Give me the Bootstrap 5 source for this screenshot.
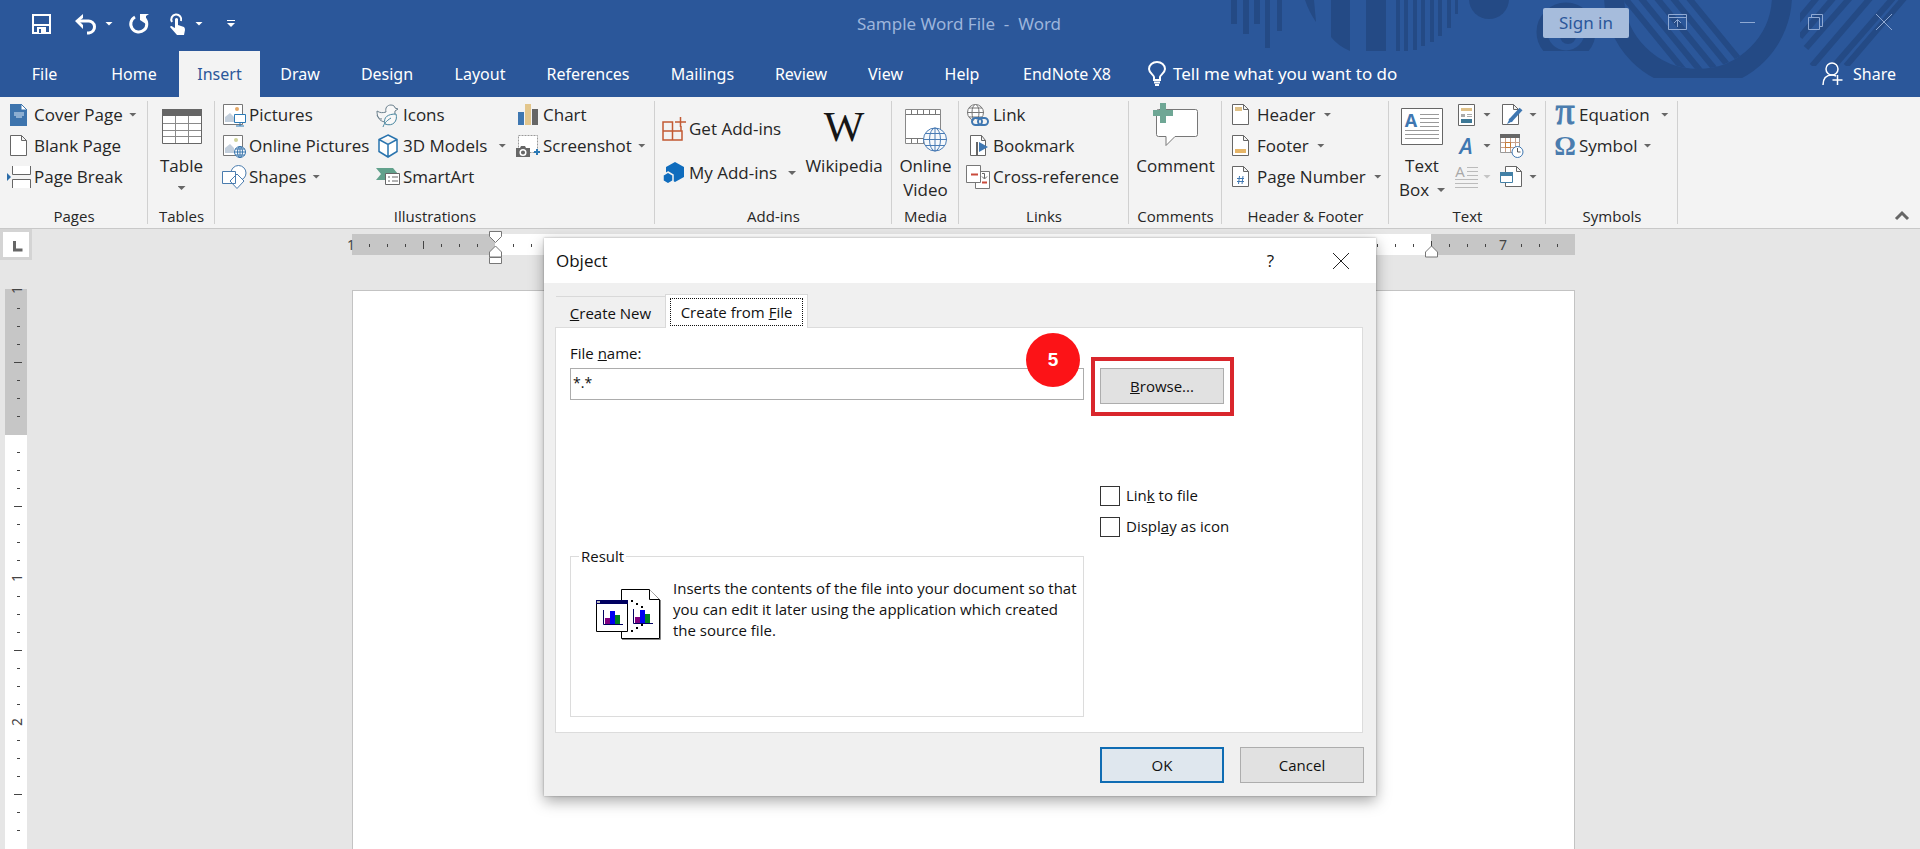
<!DOCTYPE html>
<html lang="en">
<head>
<meta charset="utf-8">
<meta name="viewport" content="width=device-width, initial-scale=1">
<title>Sample Word File - Word</title>
<link href="https://cdn.jsdelivr.net/npm/bootstrap@5.3.0/dist/css/bootstrap.min.css" rel="stylesheet">
<style>
  body { font-family: "Noto Sans", "Open Sans", sans-serif; font-size: 16px; line-height: 24px; color: #262626; background: #e6e6e6; }
  button { background: none; border: 0; padding: 0; color: inherit; font: inherit; text-align: left; white-space: nowrap; }
  svg { display: block; flex: none; overflow: visible; }
  .app { min-height: 100vh; overflow: hidden; }

  /* title bar and tabs */
  .masthead { background: #2b579a; color: #fff; }
  .masthead-art { position: absolute; top: 0; right: 0; }
  .title-row { height: 51px; padding-top: 4px; }
  .doc-title { color: #9db5dc; white-space: pre; font-size: 17px; padding-right: 34px; }
  .quick { padding-left: 32px; height: 39px; }
  .quick-gap { width: 16px; }
  .side { flex: 1 1 0; }
  .sign-in { width: 86px; height: 30px; border-radius: 2px; background: #a6bcdc; color: #2b579a; text-align: center; font-size: 17px; }
  .win-btns { gap: 53px; padding: 10px 28px 0 39px; }
  .tab-row { height: 46px; }
  .tabs { display: grid; grid-template-columns: 89px 90px 81px 80px 94px 92px 124px 105px 92px 77px 76px 134px; }
  .tabs a { color: #fff; text-decoration: none; text-align: center; line-height: 46px; white-space: nowrap; }
  .tabs a.active { background: #f3f3f3; color: #2b579a; }
  .tell { padding-left: 14px; gap: 7px; font-size: 17px; }
  .share { padding-right: 24px; gap: 10px; }

  /* ribbon */
  .ribbon { background: #f3f3f3; border-bottom: 1px solid #c8c8c8; font-family: "Open Sans", sans-serif; font-size: 17px; }
  .ribbon-groups { display: grid; grid-template-columns: 148px 67px 440px 237px 67px 170px 93px 167px 157px 132px 1fr; }
  .grp { position: relative; display: flex; flex-direction: column; }
  .grp::after { content: ""; position: absolute; right: 0; top: 4px; bottom: 4px; width: 1px; background: #d0d0d0; }
  .grp-body { height: 107px; padding-top: 2px; display: flex; }
  .grp-name { font-size: 15px; text-align: center; height: 24px; white-space: nowrap; }
  .item { display: flex; align-items: center; height: 31px; gap: 3px; }
  .tri { width: 8px; height: 4px; background: #666; clip-path: polygon(0 0, 100% 0, 50% 100%); display: block; flex: none; }
  .tri.white { background: #fff; }
  .tri.faint { background: #c4c4c4; }
  .tri.near { margin-left: 3px; }
  .tri.far { margin-left: 8px; }
  .pad { padding-left: 7px; }
  .ill { display: grid; grid-template-columns: 154px 140px auto; }
  .addins .item { height: 44px; }
  .addins { padding-top: 10px; }
  .addins .large { padding-top: 0; }
  .large { display: flex; flex-direction: column; align-items: center; text-align: center; padding-top: 4px; width: 100%; }
  .hf .item { gap: 8px; }
  .hf .tri.near { margin-left: 0; }
  .collapse-btn { align-self: end; justify-self: end; padding: 0 11px 8px 0; }
  .serif-sign { font-family: "Liberation Serif", serif; }

  /* workspace */
  .workspace { position: relative; flex: 1 1 auto; display: flex; padding-right: 27px; }
  .left-rail { width: 33px; flex: none; }
  .tab-kind { width: 32px; height: 31px; background: #fff; border: 3px solid #d4d4d4; margin-bottom: 29px; }
  .v-ruler { padding-left: 5px; }
  .doc { width: 1223px; margin: 0 auto; padding-top: 5px; flex: none; display: flex; flex-direction: column; }
  .h-ruler { margin-bottom: 35px; height: 21px; }
  .ruler-num { font-family: "Noto Sans", sans-serif; font-size: 14px; fill: #444; text-anchor: middle; }
  .paper { flex: 1 1 auto; background: #fff; border: 1px solid #c3c3c3; border-bottom: 0; }

  /* dialog */
  .dlg { position: absolute; top: 9px; left: 50%; width: 832px; margin-left: -416px; background: #f0f0f0; color: #111; font-family: "Open Sans", sans-serif; font-size: 15px; line-height: 21px; box-shadow: 0 5px 14px rgba(0,0,0,.35), 0 0 2px rgba(0,0,0,.3); padding-bottom: 13px; }
  .dlg-title { background: #fff; height: 45px; padding: 0 27px 0 12px; font-size: 17px; }
  .dlg-title .glyphs { gap: 59px; }
  .dlg-tabs { padding: 11px 0 0 12px; }
  .dlg-tab { height: 31px; width: 109px; text-align: center; border-top: 1px solid #d9d9d9; padding-top: 2px; }
  .dlg-tab.on { position: relative; z-index: 1; height: 34px; width: 143px; background: #fff; border: 1px solid #d9d9d9; border-bottom: 0; margin-bottom: -1px; padding: 2px 4px; }
  .dlg-tab.on span { display: block; border: 1px dotted #111; height: 28px; line-height: 26px; }
  .dlg-panel { margin: 0 13px 0 11px; border: 1px solid #dcdcdc; background: #fff; padding: 15px 13px 15px 14px; }
  .dlg-grid { display: grid; grid-template-columns: 514px 1fr; column-gap: 16px; }
  .file-box { width: 100%; height: 32px; border: 1px solid #acacac; padding: 0 2px 4px; margin-top: 4px; color: #111; display: block; font-size: 14px; }
  .grey-btn { width: 124px; height: 36px; background: #e1e1e1; border: 1px solid #adadad; text-align: center; }
  .grey-btn.primary { border: 2px solid #0f6cb3; background: #dfe7ee; }
  .mark-frame { position: absolute; left: -9px; top: -11px; bottom: -12px; border: 4px solid #d9262c; pointer-events: none; width: 143px; }
  .browse-cell { margin-top: 25px; }
  .step { position: absolute; right: 4px; top: -35px; width: 54px; height: 54px; border-radius: 50%; background: #fc1317; color: #fff; font: 700 19px/54px "Liberation Sans", sans-serif; text-align: center; }
  .checks { padding-top: 76px; }
  .checks label { display: flex; align-items: center; gap: 6px; height: 31px; }
  .checks input { appearance: none; width: 20px; height: 20px; border: 1px solid #333; background: #fff; margin: 0; }
  .result { border: 1px solid #dcdcdc; height: 171px; margin-top: 146px; padding: 0 10px 0 25px; min-width: 0; }
  .result legend { float: none; width: auto; font-size: 15px; line-height: 21px; margin: 0 0 0 -17px; padding: 0 2px; }
  .result-body { gap: 13px; padding-top: 11px; white-space: nowrap; }
  .result-body svg { margin-top: 11px; }
  .dlg-foot { gap: 16px; padding: 14px 12px 0 0; }
</style>
</head>
<body>
<div class="app d-flex flex-column">

<header class="masthead position-relative">
  <svg class="masthead-art" width="700" height="97" viewBox="1220 0 700 97" fill="#244a85" stroke="none">
    <defs>
      <clipPath id="ringIn"><circle cx="1698" cy="-5" r="74"/></clipPath>
      <clipPath id="ringCut"><rect x="1590" y="0" width="220" height="78"/></clipPath>
      <clipPath id="upper"><rect x="1220" y="0" width="700" height="51"/></clipPath>
      <clipPath id="upper2"><rect x="1800" y="0" width="120" height="66"/></clipPath>
    </defs>
    <path d="M1231 0h6v24h-6zM1243 0h6v34h-6zM1254 0h6v24h-6zM1265 0h5v48h-5zM1277 0h5v31h-5z"/>
    <path d="M1305 0h9l2 22q-7-10-11-22zM1331 0h19v51q-12-5-19-14zM1366 0h20v51h-20zM1396 0h4v51h-4zM1404 0h4v51h-4zM1413 0h4v50h-4zM1421 0h4v46h-4zM1430 0h4v42h-4zM1438 0h4v36h-4zM1447 0h4v28h-4zM1455 0h3v14h-3z"/>
    <circle cx="1489" cy="-1" r="20"/>
    <g clip-path="url(#upper)"><circle cx="1566" cy="32" r="24" fill="none" stroke="#244a85" stroke-width="11"/><circle cx="1568" cy="36" r="8"/></g>
    <g clip-path="url(#ringCut)"><circle cx="1698" cy="-5" r="84" fill="none" stroke="#244a85" stroke-width="20"/></g>
    <g clip-path="url(#ringIn)" stroke="#244a85" stroke-width="6"><path d="M1610-20l90 110M1626-20l90 110M1642-20l90 110M1658-20l90 110M1674-20l90 110"/></g>
    <g clip-path="url(#upper2)" stroke="#244a85" stroke-width="6"><path d="M1790 30l50-60M1800 37l60-70M1806 48l70-80M1812 66l90-105M1834 66l80-92M1846 66l90-105"/></g>
  </svg>

  <div class="title-row d-flex position-relative">
    <div class="side quick d-flex align-items-center">
      <button aria-label="Save"><svg width="19" height="20" viewBox="0 0 19 20"><path d="M1 1h17v18H1z" fill="none" stroke="#fff" stroke-width="2"/><path d="M1 10h17v2H1zM5 13h9v6H5z" fill="#fff"/><path d="M7 15h2v4H7z" fill="#2b579a"/></svg></button>
      <button class="ms-4 d-flex align-items-center gap-2" aria-label="Undo"><svg width="22" height="20" viewBox="0 0 22 20"><path d="M4 7h9a6 6 0 0 1 1 12h-2" fill="none" stroke="#fff" stroke-width="3"/><path d="M0 7l8-7v4l-4 3 4 4v4z" fill="#fff"/></svg><i class="tri white"></i></button>
      <span class="quick-gap"></span>
      <button aria-label="Repeat"><svg width="20" height="20" viewBox="0 0 20 20"><path d="M6 3a8 8 0 1 0 9 1" fill="none" stroke="#fff" stroke-width="3"/><path d="M11 0h9l-3 2v8l-6-4z" fill="#fff"/></svg></button>
      <button class="d-flex align-items-center ms-3" aria-label="Touch mode"><svg class="ms-1" width="18" height="22" viewBox="0 0 18 22"><path d="M3 9a5 5 0 1 1 9-1" fill="none" stroke="#fff" stroke-width="2"/><path d="M6 6q1.500-2 3 0v6l6 2q1 1 1 3l-1 5H8l-7-8q1-2 3 0l2 1z" fill="#fff"/></svg><i class="tri white ms-2"></i></button>
      <button class="ms-4" aria-label="Customize"><svg width="8" height="8" viewBox="0 0 8 8" fill="#fff"><path d="M0 0h8v1H0zM0 3h8l-4 4z"/></svg></button>
    </div>
    <div class="doc-title pt-2">Sample Word File  -  Word</div>
    <div class="side d-flex justify-content-end align-items-start">
      <button class="sign-in mt-1">Sign in</button>
      <div class="win-btns d-flex align-items-center">
        <button aria-label="Ribbon display"><svg width="19" height="16" viewBox="0 0 19 16" fill="none" stroke="#8fa9d3"><path d="M.5.5h18v15H.5zM.5 3.500h18M9.500 13V6M6 9l3.500-3.500L13 9"/></svg></button>
        <button aria-label="Minimize"><svg width="15" height="16" viewBox="0 0 15 16" stroke="#8fa9d3"><path d="M0 8.500h15"/></svg></button>
        <button aria-label="Restore"><svg width="15" height="16" viewBox="0 0 15 16" fill="none" stroke="#8fa9d3"><path d="M.5 3.500h11v12H.5zM3.500 3V.5h11v12H12"/></svg></button>
        <button aria-label="Close"><svg width="16" height="16" viewBox="0 0 16 16" stroke="#8fa9d3"><path d="M0 0l16 16M16 0L0 16"/></svg></button>
      </div>
    </div>
  </div>

  <div class="tab-row d-flex position-relative align-items-center">
    <nav class="tabs" aria-label="Ribbon tabs">
      <a href="#">File</a><a href="#">Home</a><a href="#" class="active">Insert</a><a href="#">Draw</a><a href="#">Design</a><a href="#">Layout</a><a href="#">References</a><a href="#">Mailings</a><a href="#">Review</a><a href="#">View</a><a href="#">Help</a><a href="#">EndNote X8</a>
    </nav>
    <button class="tell d-flex align-items-center"><svg width="18" height="24" viewBox="0 0 18 24" fill="none" stroke="#fff" stroke-width="2"><path d="M6 18v-3c0-2-5-4-5-8a8 7 0 0 1 16 0c0 4-5 6-5 8v3zM6 20.500h6M7 23h4"/></svg>Tell me what you want to do</button>
    <button class="share d-flex align-items-center ms-auto"><svg width="21" height="24" viewBox="0 0 21 24" fill="none" stroke="#fff" stroke-width="1.500"><circle cx="10" cy="7" r="6"/><path d="M1 23c0-6 3-10 9-10 2 0 3 .500 4 1M15.500 13v10M10.500 18h10"/></svg>Share</button>
  </div>
</header>

<section class="ribbon">
 <div class="ribbon-groups">
  <div class="grp"><div class="grp-body pad flex-column">
    <button class="item"><svg width="24" height="24" viewBox="0 0 24 24"><path d="M3 1h11l6 6v16H3z" fill="#3d74ad"/><path d="M14 1l6 6h-6z" fill="#fff" stroke="#3d74ad"/><path d="M7 10h10M7 12h10M9 14h6" stroke="#dbe8f5"/></svg>Cover Page<i class="tri near"></i></button>
    <button class="item"><svg width="24" height="24" viewBox="0 0 24 24" fill="#fff" stroke="#666"><path d="M3.500 1.500h11l5 5v15h-16zM14.500 1.500v5h5"/></svg>Blank Page</button>
    <button class="item"><svg width="24" height="24" viewBox="0 0 24 24"><path d="M5.500 1v8.500h18V1M5.500 23v-8.500h18V23" fill="#fff" stroke="#666"/><path d="M0 8l4 4-4 4z" fill="#2b6ca8"/></svg>Page Break</button>
  </div><div class="grp-name">Pages</div></div>

  <div class="grp"><div class="grp-body">
    <button class="large"><svg width="40" height="51" viewBox="0 0 40 51"><path d="M.5 6.500h39v34H.5z" fill="#fff" stroke="#666"/><path d="M0 6h40v7H0z" fill="#666"/><path d="M13.500 13v27M26.500 13v27M1 20.500h38M1 27.500h38M1 33.500h38" stroke="#8a8a8a"/></svg>Table<i class="tri mt-2"></i></button>
  </div><div class="grp-name">Tables</div></div>

  <div class="grp"><div class="grp-body pad ill">
    <div>
      <button class="item"><svg width="24" height="24" viewBox="0 0 24 24"><path d="M1.500 1.500h19v20h-19z" fill="#fff" stroke="#777"/><path d="M3 19v-5l5-4 4 4v5z" fill="#c3cfdc"/><circle cx="15" cy="6" r="2" fill="#e6a867"/><path d="M12.500 11.500h11v8h-11z" fill="#fff" stroke="#2b79b5"/><path d="M18 20v3M14 23h8" stroke="#2b79b5"/></svg>Pictures</button>
      <button class="item"><svg width="24" height="24" viewBox="0 0 24 24"><path d="M1.500 1.500h19v20h-19z" fill="#fff" stroke="#777"/><path d="M3 19v-5l5-4 4 4v5z" fill="#c3cfdc"/><circle cx="14" cy="6" r="2" fill="#cfd39a"/><g fill="#fff" stroke="#3a76ad"><circle cx="18" cy="18" r="5.500"/><path d="M18 12v12M12 18h12M13 15h10M13 21h10" fill="none"/><ellipse cx="18" cy="18" rx="2.500" ry="5.500" fill="none"/></g></svg>Online Pictures</button>
      <button class="item"><svg width="24" height="24" viewBox="0 0 24 24" fill="#fff" stroke="#4a7cae"><circle cx="16.500" cy="8" r="7.500"/><path d="M.5 6.500h13v12H.5zM15 9l7 7-7 7.500L8 16z"/></svg>Shapes<i class="tri near"></i></button>
    </div>
    <div>
      <button class="item"><svg width="24" height="24" viewBox="0 0 24 24" fill="#f8f8f8" stroke="#6a7f8c"><path d="M1 8c3 2 6 2 9 1-1-4 1-7 5-7 3 0 4 2 4 3l3 1-3 2c0 4-1 5-3 7M1 8c0 6 2 10 8 11M1 12c1 3 3 4 5 4"/><path d="M7 24c1-3 3-6 8-9M9 21c-2-7 3-10 11-10 2 7-3 13-11 10z" stroke="#45849e"/></svg>Icons</button>
      <button class="item"><svg width="24" height="24" viewBox="0 0 24 24" fill="#fff" stroke="#2a74ae" stroke-width="1.500"><path d="M12 1l9 4.500v12L12 23l-9-5.500v-12zM3 5.500l9 5 9-5M12 10.500V23"/></svg>3D Models<i class="tri far"></i></button>
      <button class="item"><svg width="24" height="24" viewBox="0 0 24 24"><path d="M0 3h17l5 6-5 6H0l5-6z" fill="#62a18c"/><path d="M9.500 8.500h14v11h-14z" fill="#fff" stroke="#666"/><path d="M12 12h2M16 12h6M12 16h2M16 16h6" stroke="#666"/></svg>SmartArt</button>
    </div>
    <div>
      <button class="item"><svg width="24" height="24" viewBox="0 0 24 24"><path d="M2 9h6v13H2z" fill="#3f77b1"/><path d="M9 1h6v21H9z" fill="#e3c68c"/><path d="M16 6h6v16h-6z" fill="#666"/></svg>Chart</button>
      <button class="item"><svg width="24" height="24" viewBox="0 0 24 24"><path d="M2.500 1.500h19v17h-19z" fill="#fff" stroke="#999" stroke-dasharray="2 1"/><path d="M0 14h4l1-2h4l1 2h4v9H0z" fill="#666"/><circle cx="7" cy="18.500" r="2.800" fill="none" stroke="#fff" stroke-width="1.500"/><path d="M21 15v6M18 18h6" stroke="#2b79b5" stroke-width="2"/></svg>Screenshot<i class="tri near"></i></button>
    </div>
  </div><div class="grp-name">Illustrations</div></div>

  <div class="grp"><div class="grp-body addins">
    <div class="pad">
      <button class="item"><svg width="24" height="24" viewBox="0 0 24 24" fill="none" stroke="#c25a33" stroke-width="1.500"><path d="M1 5h9.500v18H1zM1 14h19v9H10.500V5M19 14V9M18.500 0v10M13 5h11"/></svg>Get Add-ins</button>
      <button class="item"><svg width="24" height="24" viewBox="0 0 24 24"><path d="M13 1l9 5v10l-9 5-9-5V6z" fill="#0f6cbd"/><path d="M6 11l5 3v6l-5 3-5-3v-6z" fill="#0f6cbd" stroke="#f3f3f3" stroke-width="1.500"/></svg>My Add-ins<i class="tri far"></i></button>
    </div>
    <button class="large"><svg width="42" height="47" viewBox="0 0 42 47"><text class="serif-sign" x="21" y="34" font-size="43" text-anchor="middle" fill="#161616">W</text></svg>Wikipedia</button>
  </div><div class="grp-name">Add-ins</div></div>

  <div class="grp"><div class="grp-body">
    <button class="large"><svg width="42" height="51" viewBox="0 0 42 51"><path d="M.5 6.500h35v34H.5z" fill="#fff" stroke="#888"/><path d="M1 11.500h34M1 35.500h34M6.500 7v4M12.500 7v4M18.500 7v4M24.500 7v4M30.500 7v4M6.500 36v4M12.500 36v4M18.500 36v4" stroke="#777"/><g stroke="#4a7cb5" fill="#f6f9fc"><circle cx="30" cy="36.500" r="11.500"/><ellipse cx="30" cy="36.500" rx="5.500" ry="11.500" fill="none"/><path d="M30 25v23M18 36.500h24M20 30.500h20M20 42.500h20"/></g></svg>Online<br>Video</button>
  </div><div class="grp-name">Media</div></div>

  <div class="grp"><div class="grp-body flex-column pad">
    <button class="item"><svg width="24" height="24" viewBox="0 0 24 24"><g fill="#fff" stroke="#777"><circle cx="9.500" cy="9.500" r="8"/><ellipse cx="9.500" cy="9.500" rx="3.500" ry="8"/><path d="M1 9.500h17M3 5h13M3 14h13"/></g><g fill="none" stroke="#f3f3f3" stroke-width="5"><path d="M8 19h13"/></g><g fill="none" stroke="#3f77b1" stroke-width="2"><rect x="6" y="15" width="10" height="7" rx="3.500"/><rect x="12" y="15" width="10" height="7" rx="3.500"/></g></svg>Link</button>
    <button class="item"><svg width="24" height="24" viewBox="0 0 24 24"><path d="M4.500 1.500h11l4 5v15h-15zM15.500 1.500v5h4" fill="#fff" stroke="#666"/><path d="M11 8v13" stroke="#666" stroke-width="2"/><path d="M13 8l9 5-9 5z" fill="#3f77b1"/></svg>Bookmark</button>
    <button class="item"><svg width="24" height="24" viewBox="0 0 24 24"><path d="M9.500 6.500h14v17h-14z" fill="#fff" stroke="#777"/><path d="M.5.5h14v17H.5z" fill="#fff" stroke="#777"/><path d="M5 9.500h7M16 17.500h5" stroke="#c94b3c" stroke-width="2"/><path d="M16 8.500h2.500v5M16 11.500l2.500 2.500 2.500-2.500" fill="none" stroke="#666"/></svg>Cross-reference</button>
  </div><div class="grp-name">Links</div></div>

  <div class="grp"><div class="grp-body">
    <button class="large"><svg width="46" height="51" viewBox="0 0 46 51"><path d="M3.500 8.500q0-2 2-2h37q2 0 2 2v23q0 2-2 2H22l-9 9v-9H5.500q-2 0-2-2z" fill="#fff" stroke="#777"/><path d="M7 0h6v7h7v6h-7v7H7v-7H0V7h7z" fill="#6fa795"/></svg>Comment</button>
  </div><div class="grp-name">Comments</div></div>

  <div class="grp hf"><div class="grp-body flex-column" style="padding-left:10px">
    <button class="item"><svg width="17" height="24" viewBox="0 0 17 24"><path d="M.5 1.500h11l5 5v15H.5zM11.500 1.500v5h5" fill="#fff" stroke="#666"/><path d="M3 4h7v4H3z" fill="#dfc188"/></svg>Header<i class="tri near"></i></button>
    <button class="item"><svg width="17" height="24" viewBox="0 0 17 24"><path d="M.5 1.500h11l5 5v15H.5zM11.500 1.500v5h5" fill="#fff" stroke="#666"/><path d="M3 15h11v4H3z" fill="#e6b567"/></svg>Footer<i class="tri near"></i></button>
    <button class="item"><svg width="17" height="24" viewBox="0 0 17 24"><path d="M.5 1.500h11l5 5v15H.5zM11.500 1.500v5h5" fill="#fff" stroke="#666"/><path d="M7.500 11l-1 8M11 11l-1 8M5 13.500h7M5 16.500h7" stroke="#3f77b1"/></svg>Page Number<i class="tri near"></i></button>
  </div><div class="grp-name">Header &amp; Footer</div></div>

  <div class="grp"><div class="grp-body" style="padding-left:12px">
    <button class="large" style="width:42px"><svg width="42" height="51" viewBox="0 0 42 51"><path d="M.5 5.500h41v36H.5z" fill="#fff" stroke="#666"/><text x="10" y="24" font-size="18" font-weight="700" text-anchor="middle" fill="#3f77b1">A</text><path d="M19 11.500h19M19 15.500h19M19 19.500h19M19 23.500h19M4 27.500h34M4 31.500h34M4 35.500h34" stroke="#999"/></svg>Text<span class="d-flex align-items-center gap-2">Box<i class="tri"></i></span></button>
    <div style="padding-left:14px;width:56px">
      <button class="item gap-2" aria-label="Quick Parts"><svg width="18" height="24" viewBox="0 0 18 24"><path d="M1.500 1.500h16v21h-16z" fill="#fff" stroke="#666"/><path d="M4 5h11v3H4z" fill="#dfc188"/><path d="M4 11h4v3H4z" fill="#aaa"/><path d="M10 11.500h5M10 13.500h5" stroke="#aaa"/><path d="M4 16h11v4H4z" fill="#3d7896"/></svg><i class="tri"></i></button>
      <button class="item gap-2" aria-label="WordArt"><svg width="18" height="24" viewBox="0 0 18 24"><text x="9" y="20" font-size="22" font-weight="600" font-style="italic" text-anchor="middle" fill="#3f77b1">A</text></svg><i class="tri"></i></button>
      <button class="item gap-2" aria-label="Drop Cap"><svg width="18" height="24" viewBox="0 0 18 24"><text x="3" y="12" font-size="15" text-anchor="middle" fill="#a8a8a8">A</text><path d="M10 2.500h11M10 6.500h11M10 10.500h11M-2 14.500h23M-2 18.500h23M-2 22.500h23" stroke="#bbb"/></svg><i class="tri faint"></i></button>
    </div>
    <div style="width:40px">
      <button class="item" aria-label="Signature Line"><svg width="24" height="24" viewBox="0 0 24 24"><path d="M3.500 1.500h11l5 5v15h-16zM14.500 1.500v5h5" fill="#fff" stroke="#666"/><path d="M22 6L11 18" stroke="#3f77b1" stroke-width="4"/><path d="M11 15l3 3-6 3z" fill="#3f77b1"/></svg><i class="tri near"></i></button>
      <button class="item" aria-label="Date &amp; Time"><svg width="24" height="24" viewBox="0 0 24 24"><path d="M1.500 1.500h19v17h-19z" fill="#fff" stroke="#999"/><path d="M1 0h20v4H1z" fill="#666"/><path d="M6.500 4v14M11.500 4v14M16.500 4v10M2 8.500h19M2 13.500h13" stroke="#c9a08a"/><path d="M6.500 8.500h5v5h-5z" fill="none" stroke="#c77b35"/><circle cx="18.500" cy="18" r="5.500" fill="#fff" stroke="#3f77b1"/><path d="M18.500 14v4h3" fill="none" stroke="#555"/></svg></button>
      <button class="item" aria-label="Object"><svg width="24" height="24" viewBox="0 0 24 24"><path d="M6.500 1.500h11l5 5v15h-16zM17.500 1.500v5h5" fill="#fff" stroke="#666"/><path d="M1.500 7.500h12v10h-12z" fill="#fff" stroke="#4280a6"/><path d="M1 7h13v4H1z" fill="#4280a6"/></svg><i class="tri near"></i></button>
    </div>
  </div><div class="grp-name">Text</div></div>

  <div class="grp"><div class="grp-body flex-column" style="padding-left:9px">
    <button class="item"><svg width="21" height="24" viewBox="0 0 21 24"><text class="serif-sign" x="10" y="21" font-size="38" text-anchor="middle" fill="#4a7cae" stroke="#4a7cae">π</text></svg>Equation<i class="tri far"></i></button>
    <button class="item"><svg width="21" height="24" viewBox="0 0 21 24"><text class="serif-sign" x="10" y="21" font-size="27" font-weight="700" text-anchor="middle" fill="#4a7cae">Ω</text></svg>Symbol<i class="tri near"></i></button>
  </div><div class="grp-name">Symbols</div></div>

  <button class="collapse-btn" aria-label="Collapse the ribbon"><svg width="14" height="9" viewBox="0 0 14 9"><path d="M1 8l6-6 6 6" fill="none" stroke="#666" stroke-width="3"/></svg></button>
 </div>
</section>

<main class="workspace">
  <div class="left-rail">
    <div class="tab-kind"><svg width="26" height="25" viewBox="0 0 26 25"><path d="M11.500 9v9h8" fill="none" stroke="#666" stroke-width="3"/></svg></div>
    <div class="v-ruler"><svg id="vr" width="22" height="560" viewBox="0 0 22 560"></svg></div>
  </div>
  <div class="doc">
    <div class="h-ruler"><svg id="hr" width="1223" height="21" viewBox="0 0 1223 21"></svg></div>
    <div class="paper"></div>
  </div>

  <section class="dlg" role="dialog" aria-label="Object">
    <div class="dlg-title d-flex align-items-center justify-content-between">
      <span>Object</span>
      <div class="glyphs d-flex align-items-center"><button aria-label="Help">?</button><button aria-label="Close"><svg width="16" height="16" viewBox="0 0 16 16" stroke="#222"><path d="M0 0l16 16M16 0L0 16"/></svg></button></div>
    </div>
    <div class="dlg-tabs d-flex align-items-end">
      <button class="dlg-tab"><u>C</u>reate New</button>
      <button class="dlg-tab on"><span>Create from <u>F</u>ile</span></button>
    </div>
    <div class="dlg-panel">
      <div class="dlg-grid">
        <div>
          <label for="fname">File <u>n</u>ame:</label>
          <div class="position-relative"><input id="fname" class="file-box" type="text" value="*.*"><span class="step">5</span></div>
          <fieldset class="result">
            <legend>Result</legend>
            <div class="result-body d-flex">
              <svg width="64" height="52" viewBox="0 0 64 52">
                <path d="M25.500.5H53l10.500 10v39h-38z" fill="#fff" stroke="#000"/><path d="M53.500.5v10h10" fill="#fff" stroke="#000"/><path d="M26 50.500h38.500V11" fill="none" stroke="#888"/>
                <path d="M.5 11.500h31v31H.5z" fill="#fff" stroke="#000"/><path d="M0 11h32v4H0z" fill="#000060"/><path d="M1 12h3v2H1z" fill="#bbb"/>
                <g id="bars"><path d="M7.500 21v14.500H27" fill="none" stroke="#000060"/><path d="M9 29h5v6H9z" fill="#800080"/><path d="M14 22h5v13h-5z" fill="#0000f0"/><path d="M19 26h5v9h-5z" fill="#008020"/></g>
                <use href="#bars" x="30" y="-1"/>
                <path d="M35 11h2v2h-2zM40 14h2v2h-2zM45 17h2v2h-2zM45 35h2v2h-2zM40 38h2v2h-2zM35 41h2v2h-2z"/>
              </svg>
              <div>Inserts the contents of the file into your document so that<br>you can edit it later using the application which created<br>the source file.</div>
            </div>
          </fieldset>
        </div>
        <div>
          <div class="browse-cell position-relative"><button class="grey-btn"><u>B</u>rowse...</button><span class="mark-frame"></span></div>
          <div class="checks">
            <label><input type="checkbox"><span>Lin<u>k</u> to file</span></label>
            <label><input type="checkbox"><span>Displ<u>a</u>y as icon</span></label>
          </div>
        </div>
      </div>
    </div>
    <div class="dlg-foot d-flex justify-content-end"><button class="grey-btn primary">OK</button><button class="grey-btn">Cancel</button></div>
  </section>
</main>
</div>

<script src="https://cdn.jsdelivr.net/npm/bootstrap@5.3.0/dist/js/bootstrap.bundle.min.js"></script>
<script>
  // Rulers: one inch is 144 units, a tick every eighth, a long tick at each half.
  const INCH = 144, STEP = INCH / 8;
  function horizontal() {
    let s = '<path d="M0 0h1223v21H0z" fill="#c6c6c6"/><path d="M143 0h936v21H143z" fill="#fff"/>';
    for (let i = 0; i <= 67; i++) {
      const x = i * STEP - 1, n = Math.abs(i / 8 - 1);
      if (i % 8 === 0) { if (n) s += `<text class="ruler-num" x="${x}" y="16">${n}</text>`; }
      else s += i % 8 === 4 ? `<path d="M${x} 7h1v8h-1z" fill="#444"/>` : `<path d="M${x} 10h1v3h-1z" fill="#444"/>`;
    }
    const mark = (x) => `<path d="M${x - 6} 23v-5l6-6 6 6v5z" fill="#fff" stroke="#777"/>`;
    s += '<path d="M137.500-2.500h12v5l-6 6-6-6z" fill="#fff" stroke="#777"/>' + mark(143.5) + '<path d="M137.500 23.500h12v6h-12z" fill="#fff" stroke="#777"/>' + mark(1079.5);
    document.getElementById('hr').innerHTML = s;
  }
  function vertical() {
    let s = '<path d="M0 0h22v146H0z" fill="#c6c6c6"/><path d="M0 146h22v414H0z" fill="#fff"/>';
    for (let i = 0; i <= 30; i++) {
      const y = i * STEP + 1, n = Math.abs(i / 8 - 1);
      if (i % 8 === 0) { if (n) s += `<text class="ruler-num" transform="translate(17 ${y}) rotate(-90)">${n}</text>`; }
      else s += i % 8 === 4 ? `<path d="M9 ${y}h8v1H9z" fill="#444"/>` : `<path d="M12 ${y}h3v1h-3z" fill="#444"/>`;
    }
    document.getElementById('vr').innerHTML = s;
  }
  horizontal(); vertical();
</script>
</body>
</html>
